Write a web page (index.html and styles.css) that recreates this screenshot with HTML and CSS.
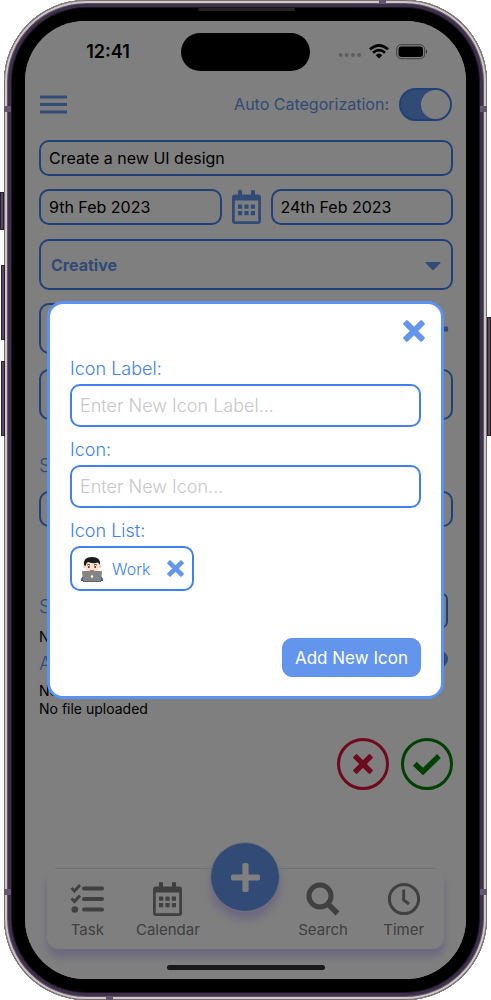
FILE: index.html
```html
<!DOCTYPE html>
<html lang="en">
<head>
<meta charset="utf-8">
<meta name="viewport" content="width=device-width, initial-scale=1">
<title>Task editor</title>
<link rel="stylesheet" href="styles.css">
</head>
<body>
<svg class="defs" aria-hidden="true">
  <symbol id="cross" viewBox="0 0 22 22"><g fill="currentColor" transform="rotate(45 11 11)"><rect x="-2" y="8" width="26" height="6" rx="1.200"/><rect x="8" y="-2" width="6" height="26" rx="1.200"/></g></symbol>
  <symbol id="calendar" viewBox="0 0 29 34"><path fill="currentColor" fill-rule="evenodd" d="M6 1.200Q6 0 7.200 0H8.800Q10 0 10 1.200V4.500H19V1.200Q19 0 20.200 0H21.800Q23 0 23 1.200V4.500H26Q29 4.500 29 7.500V31Q29 34 26 34H3Q0 34 0 31V7.500Q0 4.500 3 4.500H6ZM2.800 10.500V31.200H26.200V10.500ZM6 14.500H10.200V18.700H6ZM12.400 14.500H16.600V18.700H12.400ZM18.800 14.500H23V18.700H18.800ZM6 21H10.200V25.200H6ZM12.400 21H16.600V25.200H12.400ZM18.800 21H23V25.200H18.800Z"/></symbol>
  <symbol id="plus" viewBox="0 0 30 30"><g fill="currentColor"><rect x="1" y="12" width="28" height="6" rx="1.600"/><rect x="12" y="1" width="6" height="28" rx="1.600"/></g></symbol>
</svg>

<div class="phone">
  <span class="key key-mute"></span>
  <span class="key key-up"></span>
  <span class="key key-down"></span>
  <span class="key key-power"></span>
  <span class="band band-tl"></span>
  <span class="band band-bl"></span>
  <span class="band band-tr"></span>
  <span class="band band-br"></span>
  <span class="band band-top"></span>
  <span class="band band-bottom"></span>
  <span class="earpiece"></span>

  <div class="screen">
    <div class="status">
      <span class="clock">12:41</span>
      <span class="island"></span>
      <span class="signals">
        <svg width="24" height="11" viewBox="0 0 24 11" fill="#bbb"><circle cx="2.500" cy="9" r="2"/><circle cx="8.700" cy="9" r="2"/><circle cx="14.900" cy="9" r="2"/><circle cx="21.100" cy="9" r="2"/></svg>
        <svg width="20" height="15" viewBox="0 0 20 15" fill="none" stroke="#000" stroke-width="2.600"><path d="M1 5.300Q10 -2.600 19 5.300"/><path d="M4 8.800Q10 3.600 16 8.800"/><path d="M6.700 11.200Q10 8 13.300 11.200L10 14.600Z" fill="#000" stroke="none"/></svg>
        <svg width="32" height="16" viewBox="0 0 32 16"><rect x=".7" y=".7" width="28" height="14" rx="4.500" fill="none" stroke="#777"/><rect x="2.500" y="2.500" width="24.500" height="10.500" rx="3"/><path d="M30 5.500Q32 7.700 30 10Z" fill="#444"/></svg>
      </span>
    </div>

    <main class="editor">
      <div class="topbar">
        <button class="plain menu" aria-label="Menu"><svg width="28" height="19" viewBox="0 0 28 19" stroke="currentColor" stroke-width="2.800"><path d="M1 2H28M1 9.500H28M1 17H28"/></svg></button>
        <label class="auto">Auto Categorization:<input class="switch" type="checkbox" checked></label>
      </div>
      <input class="box title" type="text" aria-label="Task title" value="Create a new UI design">
      <div class="dates">
        <input class="box" type="text" aria-label="Start date" value="9th Feb 2023">
        <svg width="29" height="34"><use href="#calendar"/></svg>
        <input class="box" type="text" aria-label="End date" value="24th Feb 2023">
      </div>
      <div class="picker">
        <select class="box tall" aria-label="Category"><option>Creative</option></select>
        <svg width="16" height="9" viewBox="0 0 16 9"><path d="M1 0H15Q16 .5 15.500 1L8.600 8Q8 8.500 7.400 8L.5 1Q0 .5 1 0Z" fill="currentColor"/></svg>
      </div>
      <div class="icon-row">
        <input class="box tall" type="text" aria-label="Icon">
        <button class="plain" aria-label="Add icon"><svg width="26" height="26"><use href="#plus"/></svg></button>
      </div>
      <input class="box tall priority" type="text" aria-label="Priority">
      <label class="heading" for="sub">Sub:</label>
      <input class="box sub" id="sub" type="text">
      <div class="section">
        <span class="heading">Share:</span>
        <button class="add" aria-label="Add share"></button>
      </div>
      <p class="note">No user</p>
      <div class="section attach">
        <span class="heading">Add File:</span>
        <button class="dot" aria-label="Add file"></button>
      </div>
      <p class="note">No image uploaded</p>
      <p class="note">No file uploaded</p>
      <div class="actions">
        <button class="round cancel" aria-label="Cancel"><svg width="20" height="20"><use href="#cross"/></svg></button>
        <button class="round confirm" aria-label="Save"><svg width="30" height="23" viewBox="0 0 30 23"><path d="M2.800 10.800L11 18.500L27 3" fill="none" stroke="currentColor" stroke-width="5.400"/></svg></button>
      </div>
    </main>

    <nav class="tabs">
      <a class="tab" href="#task"><svg width="34" height="34" viewBox="0 0 34 34" fill="none" stroke="currentColor"><path d="M14 6.500H32M14 17H32M14 27.500H32" stroke-width="4" stroke-linecap="round"/><path d="M1.500 6L4.500 9L10 3M1.500 16.500L4.500 19.500L10 13.500" stroke-width="3"/><circle cx="4.800" cy="27.500" r="3.300" fill="currentColor" stroke="none"/></svg>Task</a>
      <a class="tab" href="#calendar-view"><svg width="29" height="34"><use href="#calendar"/></svg>Calendar</a>
      <button class="fab" aria-label="Add"><svg width="31" height="31"><use href="#plus"/></svg></button>
      <a class="tab" href="#search"><svg width="34" height="34" viewBox="0 0 34 34" fill="none" stroke="currentColor"><circle cx="14" cy="14" r="11" stroke-width="5"/><path d="M22 22L31.500 31.500" stroke-width="5.500"/></svg>Search</a>
      <a class="tab" href="#timer"><svg width="34" height="34" viewBox="0 0 34 34" fill="none" stroke="currentColor" stroke-width="3"><circle cx="17" cy="17" r="14.600"/><path d="M16.700 7.500V18L22 22"/></svg>Timer</a>
    </nav>
    <div class="home"></div>

    <div class="backdrop">
      <form class="modal" role="dialog" aria-label="New icon">
        <button class="plain close" type="button" aria-label="Close"><svg width="22" height="22"><use href="#cross"/></svg></button>
        <div class="fields">
          <div class="field"><label for="label">Icon Label:</label><input id="label" type="text" placeholder="Enter New Icon Label..."></div>
          <div class="field"><label for="icon">Icon:</label><input id="icon" type="text" placeholder="Enter New Icon..."></div>
          <div class="field">
            <span>Icon List:</span>
            <div class="chip">
              <svg width="24" height="26" viewBox="0 0 24 26"><path d="M1 25Q1 20 6 19H18Q23 20 23 25Z" fill="#1b3fb0"/><circle cx="4.300" cy="10.500" r="1.600" fill="#eecdb8"/><circle cx="19.700" cy="10.500" r="1.600" fill="#eecdb8"/><path d="M5 6H19V11Q18 17 12 17Q6 17 5 11Z" fill="#fae0d0"/><path d="M4 9Q3 1 12 1Q21 1 20 9L18 6.500Q12 8 8 6Q6 7 5.500 10Z" fill="#17191b"/><path d="M7.200 9Q8.500 8 10 9M14 9Q15.500 8 16.800 9" stroke="#222" fill="none"/><circle cx="8.800" cy="11" r="1" fill="#42342c"/><circle cx="15.200" cy="11" r="1" fill="#42342c"/><path d="M10 14.200Q12 15.300 14 14.200" stroke="#c45a55" fill="none"/><path d="M3 15H21Q22 15 22 16L21 25.500H3L2 16Q2 15 3 15Z" fill="#858585"/><path d="M3 25H21V26H3Z" fill="#666"/><circle cx="12" cy="20.500" r="1.200" fill="#fff"/></svg>
              Work
              <button class="plain" type="button" aria-label="Remove Work"><svg width="17" height="17"><use href="#cross"/></svg></button>
            </div>
          </div>
        </div>
        <button class="submit" type="button">Add New Icon</button>
      </form>
    </div>
  </div>
</div>
</body>
</html>
```

FILE: styles.css
```css
:root {
  --blue: #6495ed;
  --line: #4080f0;
}

* { box-sizing: border-box; }

body {
  margin: 0;
  background: #fff;
  font-family: Inter, "Liberation Sans", sans-serif;
  font-size: 16px;
}

button, input, select { font: inherit; color: inherit; margin: 0; }
svg { display: block; flex: none; }
.defs { position: absolute; width: 0; height: 0; }
.plain { display: block; border: 0; padding: 0; background: none; color: var(--blue); }

/* Device frame */
.phone {
  position: relative;
  display: flex;
  min-height: 100vh;
  margin: 0 4px;
  padding: 21px;
  border-radius: 82px;
  background: #000;
  box-shadow:
    inset 0 0 0 1px #77706f,
    inset 0 0 0 3px #d0c8c6,
    inset 0 0 0 4px #62556b,
    inset 0 0 0 7px #3d304b,
    inset 0 0 0 8px #1b1521;
}

.key { position: absolute; width: 4px; background: #574963; border: 1px solid #252029; }
.key-mute { left: -4px; top: 192px; height: 38px; }
.key-up { left: -3px; top: 265px; height: 75px; }
.key-down { left: -3px; top: 361px; height: 75px; }
.key-power { right: -4px; top: 317px; height: 119px; }

.band { position: absolute; width: 7px; height: 6px; background: #65566f; }
.band-tl { left: 0; top: 106px; }
.band-bl { left: 0; bottom: 105px; }
.band-tr { right: 0; top: 106px; }
.band-br { right: 0; bottom: 105px; }
.band-top { right: 101px; top: 0; height: 4px; }
.band-bottom { left: 102px; bottom: 0; height: 4px; }
.earpiece { position: absolute; top: 8px; left: 50%; width: 97px; height: 3px; margin-left: -48px; border-radius: 2px; background: #242424; }

.screen {
  position: relative;
  flex: 1;
  min-width: 0;
  display: flex;
  flex-direction: column;
  overflow: hidden;
  border-radius: 60px;
  background: #fff;
}

/* Status bar */
.status {
  display: grid;
  grid-template-columns: 1fr 129px 1fr;
  align-items: center;
  height: 61px;
}
.clock { justify-self: center; padding-left: 10px; font-size: 18px; font-weight: 600; }
.island { height: 38px; border-radius: 20px; background: #000; }
.signals { display: flex; align-items: center; justify-content: flex-end; gap: 7px; padding-right: 38px; }

/* Task editor */
.editor { display: flex; flex-direction: column; padding: 0 13px 0 14px; }
.topbar { display: flex; align-items: center; justify-content: space-between; height: 44px; margin-bottom: 14px; padding-right: 1px; }
.auto { display: flex; align-items: center; gap: 10px; color: var(--blue); }
.switch {
  appearance: none;
  width: 53px;
  height: 33px;
  border: 2px solid var(--line);
  border-radius: 17px;
  background: var(--blue);
}
.switch::before {
  content: "";
  display: block;
  width: 29px;
  height: 29px;
  margin-left: auto;
  border-radius: 50%;
  background: #fff;
}

.box {
  appearance: none;
  display: block;
  width: 100%;
  min-width: 0;
  height: 36px;
  padding: 0 8px;
  border: 2px solid var(--line);
  border-radius: 10px;
  background: transparent;
}
.tall { height: 51px; padding: 0 10px; }
.title { margin-bottom: 13px; }
.dates { display: flex; align-items: center; gap: 10px; margin-bottom: 14px; color: var(--blue); }
.dates .box { flex: 1; color: #000; }
.picker { position: relative; margin-bottom: 13px; color: var(--blue); }
.picker select { font-weight: 700; }
.picker svg { position: absolute; right: 12px; top: 23px; }
.icon-row { display: flex; align-items: center; gap: 12px; margin-bottom: 15px; padding-right: 4px; }
.priority { margin-bottom: 34px; }
.heading { color: var(--blue); font-size: 19px; font-weight: 300; line-height: 24px; }
.sub { margin: 13px 0 66px; }
.section { display: flex; justify-content: space-between; height: 35px; padding-right: 5px; }
.section .heading { padding-top: 2px; }
.add { width: 60px; height: 35px; border: 2px solid var(--line); border-radius: 6px; background: none; }
.attach { height: 36px; }
.attach .heading { padding-top: 6px; }
.dot { width: 18px; height: 18px; margin-top: 4px; padding: 0; border: 0; border-radius: 50%; background: var(--blue); }
.note { margin: 0; font-size: 14px; line-height: 18px; }
.actions { display: flex; justify-content: flex-end; gap: 12px; margin: 20px 0; }
.round {
  display: grid;
  place-items: center;
  width: 52px;
  height: 52px;
  padding: 0;
  border: 3px solid;
  border-radius: 50%;
  background: none;
}
.cancel { color: crimson; }
.confirm { color: green; }

/* Bottom navigation */
.tabs {
  display: grid;
  grid-template-columns: 80fr 80fr 74fr 80fr 80fr;
  margin: auto 22px 0;
  padding: 15px 0 9px;
  border-radius: 12px;
  background: linear-gradient(#e6e6ec, #e6e6ec) center 1px / 382px 1px no-repeat, #fff;
  box-shadow: 0 8px 10px #d8ceff;
}
.tab { display: flex; flex-direction: column; align-items: center; gap: 4px; color: #808080; font-size: 15px; line-height: 20px; text-decoration: none; }
.fab {
  justify-self: center;
  display: grid;
  place-items: center;
  width: 70px;
  height: 70px;
  margin: -40px -10px 0;
  padding: 0;
  border: 1px solid #e8e8f0;
  border-radius: 50%;
  background: var(--blue);
  color: #fff;
  box-shadow: 0 8px 10px #d8ceff;
}
.home { width: 158px; height: 5px; margin: 16px auto 9px; border-radius: 3px; background: #333; }

/* New icon dialog */
.backdrop {
  position: absolute;
  inset: 0;
  display: flex;
  align-items: center;
  justify-content: center;
  background: rgba(0, 0, 0, .5);
}
.modal {
  display: flex;
  flex-direction: column;
  width: 90%;
  padding: 16px 16px 19px;
  border: 3px solid #5c93f3;
  border-radius: 16px;
  background: #fff;
}
.close { align-self: flex-end; }
.fields { display: grid; gap: 11px; margin: 15px 4px 47px; }
.field { display: grid; gap: 3px; color: var(--line); font-size: 18px; font-weight: 300; line-height: 24px; }
.field input {
  width: 100%;
  height: 43px;
  padding: 0 8px;
  border: 2px solid var(--line);
  border-radius: 10px;
  background: #fff;
  color: #222;
}
.field input::placeholder { color: #c7c7c7; opacity: 1; }
.chip {
  display: flex;
  align-items: center;
  justify-self: start;
  gap: 8px;
  height: 45px;
  padding: 0 8px;
  border: 2px solid var(--line);
  border-radius: 10px;
  font-size: 16px;
}
.chip button { margin-left: 8px; }
.submit {
  align-self: flex-end;
  height: 39px;
  margin-right: 4px;
  padding: 0 12px;
  border: 1px solid #5b91f2;
  border-radius: 10px;
  background: var(--blue);
  color: #fff;
  font-size: 17px;
}
```
